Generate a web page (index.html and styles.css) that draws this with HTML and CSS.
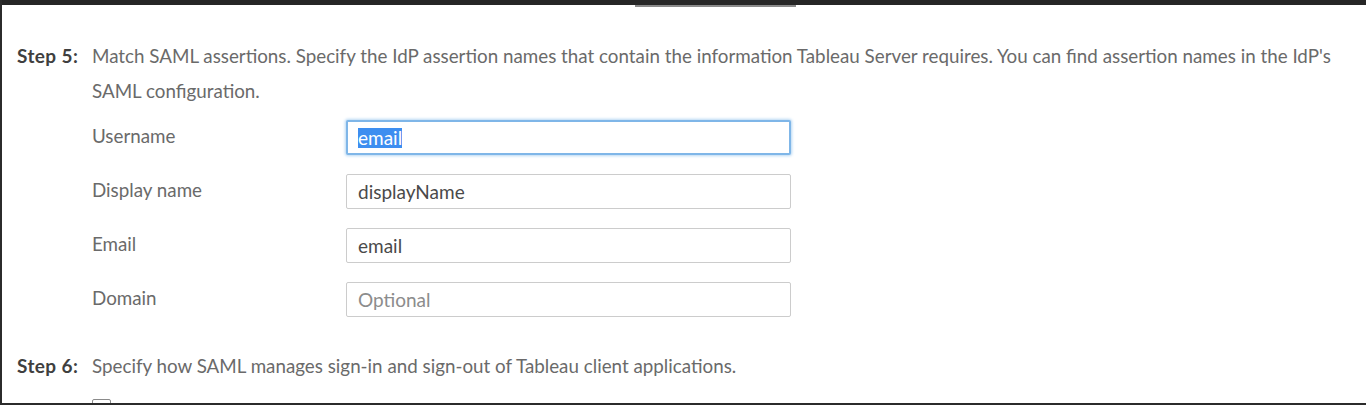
FILE: index.html
```html
<!DOCTYPE html>
<html>
<head>
    <meta charset="utf-8">
    <title>SAML settings</title>
    <link rel="stylesheet" href="styles.css">
</head>
<body>
    <div class="window">
        <div class="topbar"><div class="tab-shadow"></div></div>
        <div class="content">
            <div class="step">
                <div class="step-label">Step 5:</div>
                <div class="step-body">
                    <div class="step-text">Match SAML assertions. Specify the IdP assertion names that contain the information Tableau Server requires. You can find assertion names in the IdP's SAML configuration.</div>
                    <div class="fields">
                        <div class="field-label">Username</div>
                        <div class="field field-focus"><span class="sel">email</span></div>

                        <div class="field-label">Display name</div>
                        <input class="field" type="text" value="displayName">

                        <div class="field-label">Email</div>
                        <input class="field" type="text" value="email">

                        <div class="field-label">Domain</div>
                        <input class="field" type="text" placeholder="Optional">
                    </div>
                </div>
            </div>

            <div class="step step-6">
                <div class="step-label">Step 6:</div>
                <div class="step-body">
                    <div class="step-text">Specify how SAML manages sign-in and sign-out of Tableau client applications.</div>
                    <div class="check"></div>
                </div>
            </div>
        </div>
    </div>
</body>
</html>
```

FILE: styles.css
```css
html, body {
	margin: 0;
	padding: 0;
	background: #ffffff;
}
.window {
	box-sizing: border-box;
	height: 405px;
	overflow: hidden;
	border-left: 2px solid #2b2b2b;
	border-bottom: 2px solid #2b2b2b;
	font: normal 18.8px/35px Lato, "Open Sans", sans-serif;
	color: #6a6a6a;
}
.topbar {
	height: 5px;
	background: #262626;
	position: relative;
}
.tab-shadow {
	position: absolute;
	left: 633px;
	top: 5px;
	width: 161px;
	height: 2px;
	background: #8a8a8a;
}
.content {
	padding: 33px 20px 0 15px;
}
.step {
	display: flex;
}
.step-label {
	width: 75px;
	flex: none;
	font-weight: bold;
	font-size: 19px;
	letter-spacing: 0.4px;
	color: #3f3f3f;
}
.step-body {
	flex: 1;
}
.fields {
	display: grid;
	grid-template-columns: 254px 445px;
	row-gap: 19px;
	margin-top: 12px;
}
.field-label {
	line-height: 20px;
	padding-top: 6px;
}
.field {
	box-sizing: border-box;
	height: 35px;
	margin: 0;
	padding: 0 11px;
	border: 1px solid #cccccc;
	border-radius: 2px;
	font: normal 19px Lato, "Open Sans", sans-serif;
	color: #4a4a4a;
	background: #ffffff;
	outline: none;
}
.field::placeholder {
	color: #8c8c8c;
}
.field-focus {
	display: flex;
	align-items: center;
	border: 2px solid #7fb6e8;
	box-shadow: 0 0 3px 1px #b6d7f3;
	padding-left: 10px;
}
.sel {
	background: #3d8ef0;
	color: #ffffff;
	line-height: 20px;
}
.step-6 {
	margin-top: 31px;
}
.check {
	width: 19px;
	height: 19px;
	margin-top: 16px;
	border: 1px solid #8a8a8a;
	border-radius: 2px;
	box-sizing: border-box;
}
```
